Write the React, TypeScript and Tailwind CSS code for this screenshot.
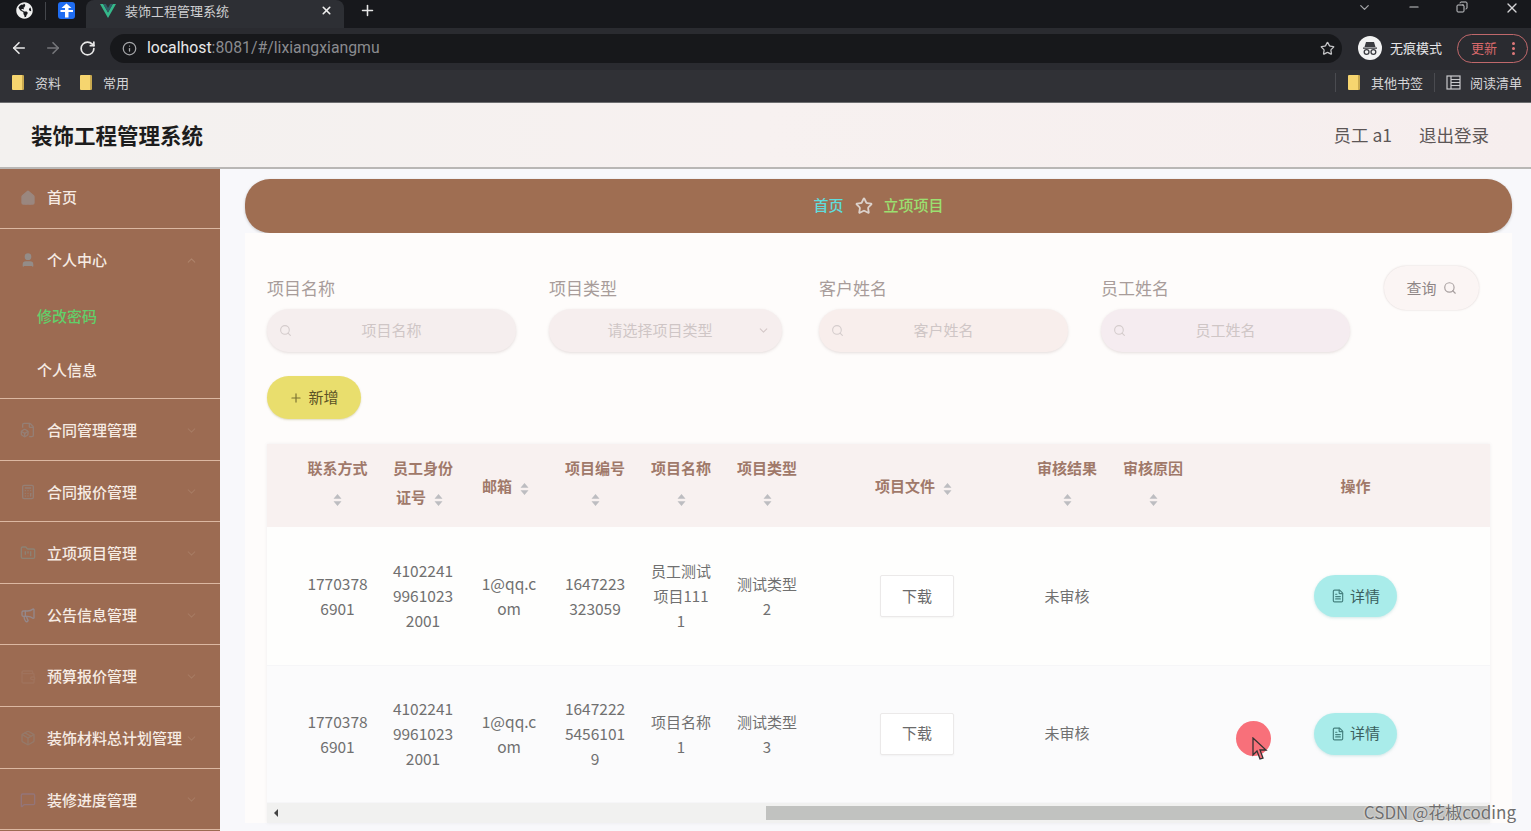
import React from "react";
import { ArrowLeft, ArrowRight, RotateCw, Info, Star, Plus, X, Minus, ChevronDown, ChevronUp, Search, FileText, Copy, Home, User, FileBox, Calculator, FolderKanban, Megaphone, Wallet, Package, MessageSquare } from "lucide-react";
import { FaGlobeAmericas } from "react-icons/fa";

const font = "[font-family:'Noto_Sans_CJK_SC','Noto_Sans',sans-serif]";

function Folder() {
  return <span className="inline-block shrink-0 w-[12px] h-[15px] bg-[#f6d56f] rounded-[1px] border-r-2 border-[#c9a94f]" />;
}

function Sort() {
  return (
    <span className="inline-block w-[24px] text-center align-middle leading-none">
      <svg className="inline-block" width="9" height="14" viewBox="0 0 9 14">
        <path d="M4.5 1 L8.5 5.7 H0.5 Z M4.5 13 L8.5 8.3 H0.5 Z" fill="#bdbdc1" />
      </svg>
    </span>
  );
}

function SideItem({ icon, label, arrow }: { icon: React.ReactNode; label: string; arrow?: boolean }) {
  return (
    <div className="h-[61.6px] shrink-0 flex items-center pl-[20px] pr-[22px] pt-[2px] border-b border-[#dcb8a2] text-[15px] font-medium text-[#f6ebe4]">
      <span className="w-[27px] flex items-center opacity-50">{icon}</span>
      <span className="flex-1">{label}</span>
      {arrow && <ChevronDown size={13} className="text-[#a67a62]" />}
    </div>
  );
}

function Field({ label, text, width, itemWidth, tint, select }: { label: string; text: string; width: string; itemWidth: string; tint: string; select?: boolean }) {
  return (
    <div className={`${itemWidth} pt-[9px]`}>
      <div className="text-[17px] leading-[26px] text-[#a89c9a]">{label}</div>
      <div className={`${width} ${tint} h-[43px] mt-[8px] rounded-[22px] flex items-center px-[12px] shadow-[0_1px_3px_rgba(150,130,130,0.25)] text-[15px] text-[#cfc6c6]`}>
        {select ? <span className="w-[2px]" /> : <Search size={13} className="text-[#d4cccc]" />}
        <span className="flex-1 text-center">{text}</span>
        {select ? <ChevronDown size={13} className="text-[#d4c8c8]" /> : <span className="w-[13px]" />}
      </div>
    </div>
  );
}

function Th({ children, sort, wrapped }: { children?: React.ReactNode; sort?: boolean; wrapped?: boolean }) {
  return (
    <th className={`px-[12px] font-bold text-[15px] leading-[29px] text-[#a0796a] text-center break-all align-middle ${wrapped ? "pb-[7px]" : "pb-[1px]"}`}>
      {children}
      {sort && <Sort />}
    </th>
  );
}

function Td({ children, cjk }: { children?: React.ReactNode; cjk?: boolean }) {
  return <td className={`px-[12px] text-center break-all align-middle leading-[25px] text-[#707070] ${cjk ? "text-[15px]" : "text-[15.5px]"}`}>{children}</td>;
}

function Row({ bg, h, code, name, type }: { bg: string; h: string; code: string; name: string; type: string }) {
  return (
    <tr className={`${bg} ${h} border-b border-[#f6f6f8]`}>
      <td />
      <Td>17703786901</Td>
      <Td>410224199610232001</Td>
      <Td>1@qq.com</Td>
      <Td>{code}</Td>
      <Td cjk>{name}</Td>
      <Td cjk>{type}</Td>
      <td className="text-center align-middle">
        <button className="w-[74px] h-[42px] bg-white border border-[#ebe9e9] rounded-[2px] text-[15px] text-[#6a6a6a] shadow-[0_1px_2px_rgba(0,0,0,0.04)]">下载</button>
      </td>
      <td className="text-center align-middle text-[15px] text-[#707070]">未审核</td>
      <td />
      <td className="text-center align-middle">
        <button className="w-[83px] h-[42px] rounded-full bg-[#a9ecea] text-[15px] text-[#3a5f5e] inline-flex items-center justify-center gap-[5px] shadow-[0_1px_3px_rgba(120,190,190,0.35)]">
          <FileText size={14} className="text-[#45817f]" />详情
        </button>
      </td>
    </tr>
  );
}

export default function App() {
  return (
    <div className={`${font} relative w-[1531px] h-[831px] overflow-hidden bg-[#f8f8fb] flex flex-col`}>
      {/* Browser tab strip */}
      <div className="h-[28px] shrink-0 bg-[#17181c] flex items-start text-white">
        <div className="w-[86px] h-[21px] flex items-center pl-[16px]">
          <FaGlobeAmericas size={17} className="text-[#f0f0f0]" />
          <span className="w-px h-[18px] bg-[#44464b] ml-[12px] mr-[12px]" />
          <svg width="17" height="17" viewBox="0 0 17 17">
            <rect width="17" height="17" rx="3" fill="#1f6df2" />
            <path d="M8.5 1.5 L13.5 6 H10.5 V8 H15 V10 H10.5 V15.5 H7 V10 H2.5 V8 H7 V6 H3.5 Z" fill="#fff" />
          </svg>
        </div>
        <div className="w-[258px] h-[28px] bg-[#2d2f34] rounded-t-[8px] flex items-center pl-[14px] pr-[11px] pb-[7px]">
          <svg width="16" height="14" viewBox="0 0 16 14">
            <path d="M0 0 H3.2 L8 8.4 L12.8 0 H16 L8 14 Z" fill="#35b88a" />
            <path d="M3.2 0 H5.8 L8 3.9 L10.2 0 H12.8 L8 8.4 Z" fill="#2f5f66" />
          </svg>
          <span className="ml-[9px] flex-1 text-[13px] text-[#cfcfd2] whitespace-nowrap">装饰工程管理系统</span>
          <X size={13} strokeWidth={3} className="text-[#eeeeee]" />
        </div>
        <Plus size={17} strokeWidth={2.2} className="ml-[15px] mt-[2px] text-[#e6e6e6]" />
        <div className="flex-1" />
        <ChevronDown size={15} className="text-[#a5a6a9] mr-[35px]" />
        <Minus size={14} className="text-[#c9c9cc] mr-[35px]" />
        <Copy size={12} className="text-[#c9c9cc] mr-[36px] mt-px -scale-x-100" />
        <X size={16} className="text-[#d5d5d7] mr-[11px]" />
      </div>

      {/* Toolbar */}
      <div className="h-[42px] shrink-0 bg-[#2a2b30] flex items-center pl-[10px] pb-[2px]">
        <ArrowLeft size={18} strokeWidth={2.2} className="text-[#e8e8e8]" />
        <ArrowRight size={18} strokeWidth={2.2} className="text-[#75767a] ml-[16px]" />
        <RotateCw size={17} strokeWidth={2.4} className="text-[#e8e8e8] ml-[17px]" />
        <div className="w-[1232px] h-[29px] ml-[14px] bg-[#17181b] rounded-full flex items-center pl-[12px] pr-[7px]">
          <Info size={15} className="text-[#a5a6a9]" />
          <span className="ml-[10px] text-[15.8px] text-[#e8e8ea] [font-family:'Roboto',sans-serif]">localhost<span className="text-[#8a8b8f]">:8081/#/lixiangxiangmu</span></span>
          <div className="flex-1" />
          <Star size={15} strokeWidth={2} className="text-[#c6c6c8]" />
        </div>
        <div className="ml-[16px] flex items-center">
          <svg width="24" height="24" viewBox="0 0 24 24">
            <circle cx="12" cy="12" r="12" fill="#f2f2f2" />
            <path d="M8 6 H16 L17.5 11 H6.5 Z M5 11.5 H19 V12.7 H5 Z" fill="#3a3b40" />
            <circle cx="8.6" cy="16" r="2.4" fill="none" stroke="#3a3b40" strokeWidth="1.3" />
            <circle cx="15.4" cy="16" r="2.4" fill="none" stroke="#3a3b40" strokeWidth="1.3" />
          </svg>
          <span className="ml-[8px] text-[13px] text-[#e6e6e8] whitespace-nowrap">无痕模式</span>
        </div>
        <div className="ml-[15px] w-[71px] h-[29px] rounded-full border border-[#c0686b] flex items-center pl-[13px] text-[13px] text-[#d9696b]">
          更新
          <span className="ml-[15px] flex flex-col gap-[2px]">
            <i className="w-[3px] h-[3px] rounded-full bg-[#e0787a]" />
            <i className="w-[3px] h-[3px] rounded-full bg-[#e0787a]" />
            <i className="w-[3px] h-[3px] rounded-full bg-[#e0787a]" />
          </span>
        </div>
      </div>

      {/* Bookmarks */}
      <div className="h-[33px] shrink-0 bg-[#303136] border-b border-[#6d6e70] flex items-center pl-[12px] pr-[9px] pb-[7px] text-[13px] text-[#d6d6d8]">
        <Folder /><span className="ml-[11px]">资料</span>
        <span className="ml-[19px] flex"><Folder /></span><span className="ml-[11px]">常用</span>
        <div className="flex-1" />
        <span className="w-px h-[19px] bg-[#4a4b50] mr-[12px]" />
        <Folder /><span className="ml-[11px]">其他书签</span>
        <span className="w-px h-[19px] bg-[#4a4b50] mx-[11px]" />
        <svg width="15" height="15" viewBox="0 0 15 15" fill="none" stroke="#c9c9cc" strokeWidth="1.2">
          <rect x="1" y="1" width="13" height="13" />
          <path d="M5 1 V14 M5 4.5 H14 M5 7.5 H14 M5 10.5 H14" />
        </svg>
        <span className="ml-[9px]">阅读清单</span>
      </div>

      {/* App header */}
      <div className="h-[66px] shrink-0 z-10 bg-gradient-to-r from-[#f3f1ef] via-[#f7f1f0] to-[#f6eeee] border-b-2 border-[#b9b7b5] flex items-center pl-[31px] pr-[42px]">
        <h1 className="text-[21.5px] font-bold text-[#1c1c1c] flex-1">装饰工程管理系统</h1>
        <span className="text-[17.5px] text-[#5c5656]">员工 a1</span>
        <span className="ml-[27px] text-[17.5px] text-[#5c5656]">退出登录</span>
      </div>

      <div className="flex flex-1 min-h-0">
        {/* Sidebar */}
        <aside className="w-[220px] shrink-0 bg-[#9c6b52] flex flex-col overflow-hidden">
          <div className="h-[60px] shrink-0 flex items-center pl-[20px] pb-[2px] border-b border-[#dcb8a2] text-[15px] font-medium text-[#f6ebe4]">
            <span className="w-[27px] opacity-50"><Home size={16} fill="#9aa3ad" className="text-[#9aa3ad]" /></span>
            首页
          </div>
          <div className="h-[170px] shrink-0 border-b border-[#dcb8a2]">
            <div className="h-[60px] pt-[2px] flex items-center pl-[20px] pr-[22px] text-[15px] font-medium text-[#f6ebe4]">
              <span className="w-[27px] opacity-60"><User size={16} fill="#8fa3ad" className="text-[#8fa3ad]" /></span>
              <span className="flex-1">个人中心</span>
              <ChevronUp size={13} className="text-[#ad826a]" />
            </div>
            <div className="h-[54px] flex items-center pl-[37px] text-[15px] font-medium text-[#62cf69]">修改密码</div>
            <div className="h-[54px] flex items-center pl-[37px] text-[15px] font-medium text-[#f6ebe4]">个人信息</div>
          </div>
          <SideItem icon={<FileBox size={16} className="text-[#8f9398]" />} label="合同管理管理" arrow />
          <SideItem icon={<Calculator size={16} className="text-[#8f9398]" />} label="合同报价管理" arrow />
          <SideItem icon={<FolderKanban size={16} className="text-[#7f9a96]" />} label="立项项目管理" arrow />
          <SideItem icon={<Megaphone size={16} className="text-[#8fa6c4]" />} label="公告信息管理" arrow />
          <SideItem icon={<Wallet size={16} className="text-[#a37a66]" />} label="预算报价管理" arrow />
          <SideItem icon={<Package size={16} className="text-[#8f8780]" />} label="装饰材料总计划管理" arrow />
          <SideItem icon={<MessageSquare size={16} className="text-[#8d80a0]" />} label="装修进度管理" arrow />
        </aside>

        {/* Main */}
        <main className="flex-1 min-w-0 pt-[10px] pl-[25px] pr-[19px] overflow-hidden">
          <div className="h-[54px] rounded-[25px] bg-[#9f6e52] shadow-[0_1px_3px_rgba(0,0,0,0.2)] flex items-center justify-center text-[15px] font-medium pb-[1px]">
            <span className="text-[#5fdcdc]">首页</span>
            <Star size={18} strokeWidth={2.4} className="text-[#dcd2cc] mx-[11px]" />
            <span className="text-[#9be070]">立项项目</span>
          </div>

          <div className="bg-[#fefcfb] pt-[33px] pl-[22px] pr-[22px] h-[590px]">
            <div className="flex items-start">
              <Field label="项目名称" text="项目名称" width="w-[249px]" itemWidth="w-[282px]" tint="bg-[#f5eeee]" />
              <Field label="项目类型" text="请选择项目类型" width="w-[233px]" itemWidth="w-[270px]" tint="bg-[#f6eeee]" select />
              <Field label="客户姓名" text="客户姓名" width="w-[249px]" itemWidth="w-[282px]" tint="bg-[#f8eeec]" />
              <Field label="员工姓名" text="员工姓名" width="w-[249px]" itemWidth="w-[283px]" tint="bg-[#f5ecf0]" />
              <button className="w-[95px] h-[44px] rounded-[22px] bg-[#fbf5f4] shadow-[0_0_2px_rgba(150,130,130,0.35)] text-[15px] text-[#8f8686] flex items-center justify-center gap-[6px]">
                查询<Search size={14} className="text-[#a8a0a0]" />
              </button>
            </div>

            <button className="mt-[24px] w-[94px] h-[43px] rounded-full bg-[#e9de6d] text-[15px] text-[#5b5326] flex items-center justify-center gap-[5px] shadow-[0_1px_2px_rgba(150,140,60,0.3)]">
              <Plus size={14} className="text-[#7a7133]" />新增
            </button>

            <div className="mt-[25px] w-[1223px] overflow-hidden shadow-[0_0_3px_rgba(120,120,140,0.12)]">
              <table className="table-fixed border-collapse w-[1248px]">
                <colgroup>
                  <col className="w-[28px]" />
                  <col className="w-[85px]" />
                  <col className="w-[86px]" />
                  <col className="w-[86px]" />
                  <col className="w-[86px]" />
                  <col className="w-[86px]" />
                  <col className="w-[86px]" />
                  <col className="w-[214px]" />
                  <col className="w-[86px]" />
                  <col className="w-[86px]" />
                  <col className="w-[319px]" />
                </colgroup>
                <thead>
                  <tr className="h-[83px] bg-[#f8f1f0]">
                    <th />
                    <Th sort wrapped>联系方式</Th>
                    <Th sort wrapped>员工身份证号</Th>
                    <Th sort>邮箱</Th>
                    <Th sort wrapped>项目编号</Th>
                    <Th sort wrapped>项目名称</Th>
                    <Th sort wrapped>项目类型</Th>
                    <Th sort>项目文件</Th>
                    <Th sort wrapped>审核结果</Th>
                    <Th sort wrapped>审核原因</Th>
                    <Th>操作</Th>
                  </tr>
                </thead>
                <tbody>
                  <Row bg="bg-[#fefefd]" h="h-[138px]" code="1647223323059" name="员工测试项目1111" type="测试类型2" />
                  <Row bg="bg-[#fbfbfc]" h="h-[137px]" code="164722254561019" name="项目名称1" type="测试类型3" />
                </tbody>
              </table>
              <div className="h-[20px] bg-[#f1f1f0] flex items-center">
                <span className="ml-[7px] w-0 h-0 border-y-[4px] border-y-transparent border-r-[4px] border-r-[#444]" />
                <div className="ml-[488px] flex-1 h-[14px] bg-[#c1c2c0]" />
              </div>
            </div>
          </div>
        </main>
      </div>

      {/* Click highlight & mouse cursor */}
      <div className="absolute left-[1236px] top-[721px] w-[35px] h-[35px] rounded-full bg-[#f8707a]" />
      <svg className="absolute left-[1252px] top-[737px]" width="16" height="24" viewBox="0 0 16 24">
        <path d="M1 1 V18 L5 14 L8 22 L11 21 L8 13 H14 Z" fill="#f8707a" stroke="#333" strokeWidth="1.3" />
      </svg>
      {/* Watermark */}
      <div className="absolute right-[15px] bottom-[9px] text-[17px] leading-[20px] text-[#6e6e6e] whitespace-nowrap [text-shadow:0_0_2px_#fff]">CSDN @花椒coding</div>
    </div>
  );
}
